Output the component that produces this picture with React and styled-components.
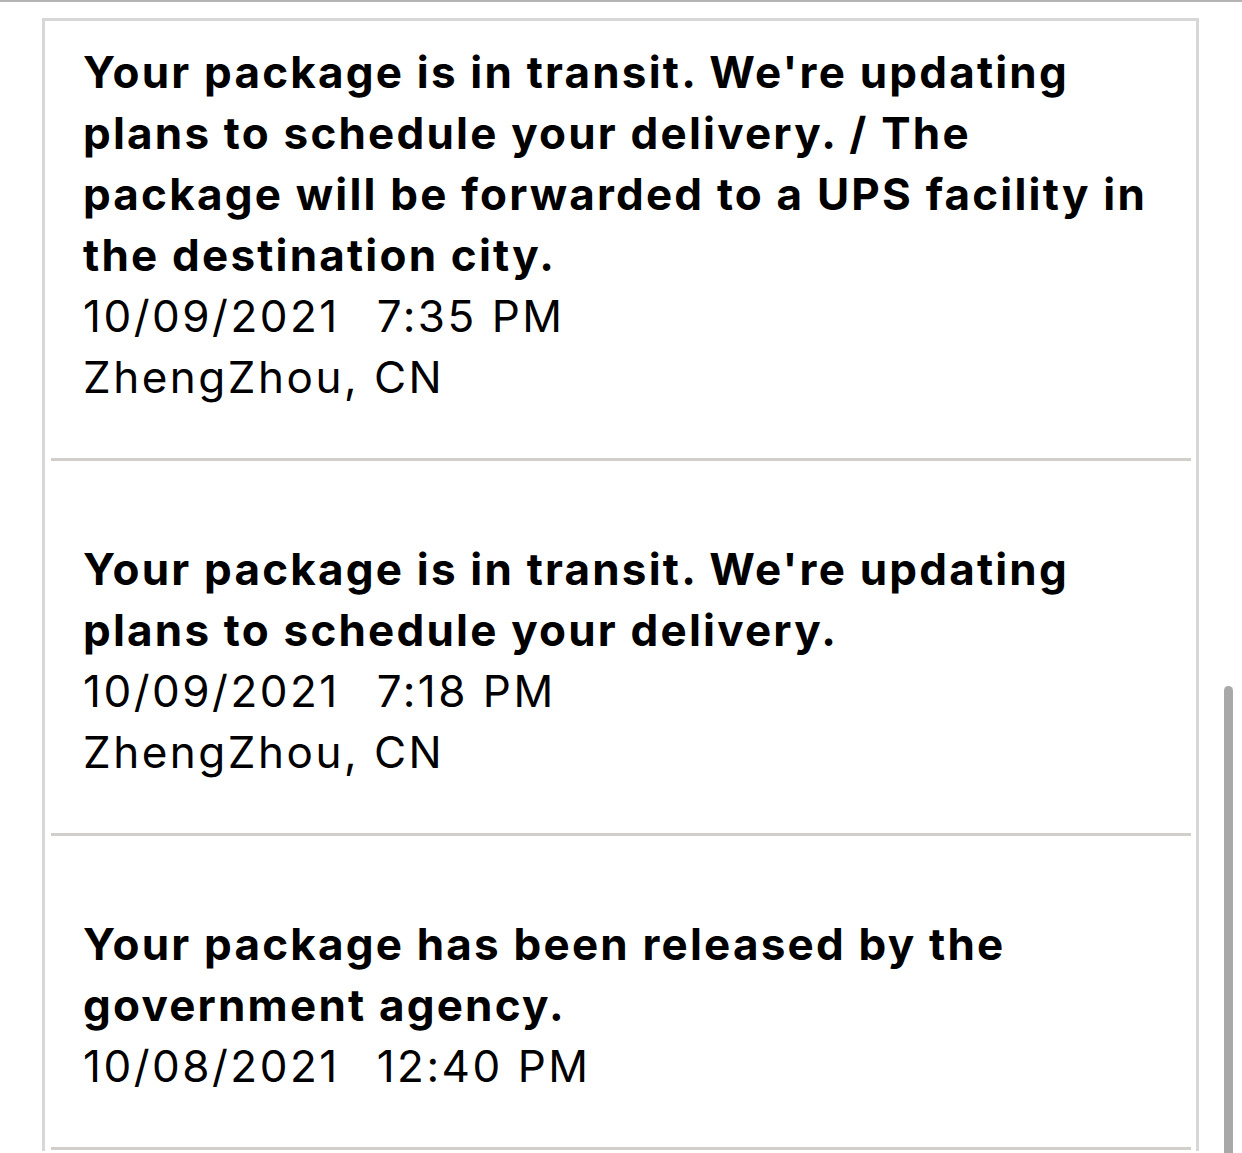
import React from 'react';
import styled, { createGlobalStyle } from 'styled-components';

const GlobalStyle = createGlobalStyle`
  html, body {
    margin: 0;
    padding: 0;
    background: #fff;
    overflow: hidden;
  }
  body {
    font-family: Inter, "Liberation Sans", Arial, sans-serif;
    color: #000;
  }
`;

const Page = styled.div`
  border-top: 2px solid #b4b4b4;
  padding: 16px 43px 0 42px;
  height: 1151px;
  box-sizing: border-box;
`;

const Card = styled.div`
  border: 3px solid #d7d7d7;
  border-bottom: none;
  padding: 0 5px 200px 6px;
  background: #fff;
`;

const Item = styled.div`
  padding: ${(p) => (p.$first ? '21px' : '78px')} 0 50px 32px;
  border-bottom: 3px solid #d2cecb;
`;

const Title = styled.div`
  font-size: 44px;
  line-height: 61px;
  font-weight: 700;
  letter-spacing: 2.2px;
`;

const Line = styled.span`
  display: block;
  white-space: nowrap;
`;

const Meta = styled.div`
  font-size: 44px;
  line-height: 61px;
  font-weight: 400;
  letter-spacing: 2.5px;
  white-space: pre;
`;

const Time = styled.span`
  margin-left: 37px;
`;

const Scrollbar = styled.div`
  position: fixed;
  right: 9px;
  top: 686px;
  width: 9px;
  height: 480px;
  background: #a8a8a8;
  border-radius: 5px 5px 0 0;
`;

const events = [
  {
    lines: [
      "Your package is in transit. We're updating",
      'plans to schedule your delivery. / The',
      'package will be forwarded to a UPS facility in',
      'the destination city.',
    ],
    date: '10/09/2021',
    time: '7:35 PM',
    place: 'ZhengZhou, CN',
  },
  {
    lines: [
      "Your package is in transit. We're updating",
      'plans to schedule your delivery.',
    ],
    date: '10/09/2021',
    time: '7:18 PM',
    place: 'ZhengZhou, CN',
  },
  {
    lines: ['Your package has been released by the', 'government agency.'],
    date: '10/08/2021',
    time: '12:40 PM',
  },
];

export default function App() {
  return (
    <>
      <GlobalStyle />
      <Page>
        <Card>
          {events.map((ev, i) => (
            <Item key={i} $first={i === 0}>
              <Title>
                {ev.lines.map((l) => (
                  <Line key={l}>{l}</Line>
                ))}
              </Title>
              <Meta>
                {ev.date}
                <Time>{ev.time}</Time>
              </Meta>
              {ev.place && <Meta>{ev.place}</Meta>}
            </Item>
          ))}
        </Card>
      </Page>
      <Scrollbar />
    </>
  );
}
